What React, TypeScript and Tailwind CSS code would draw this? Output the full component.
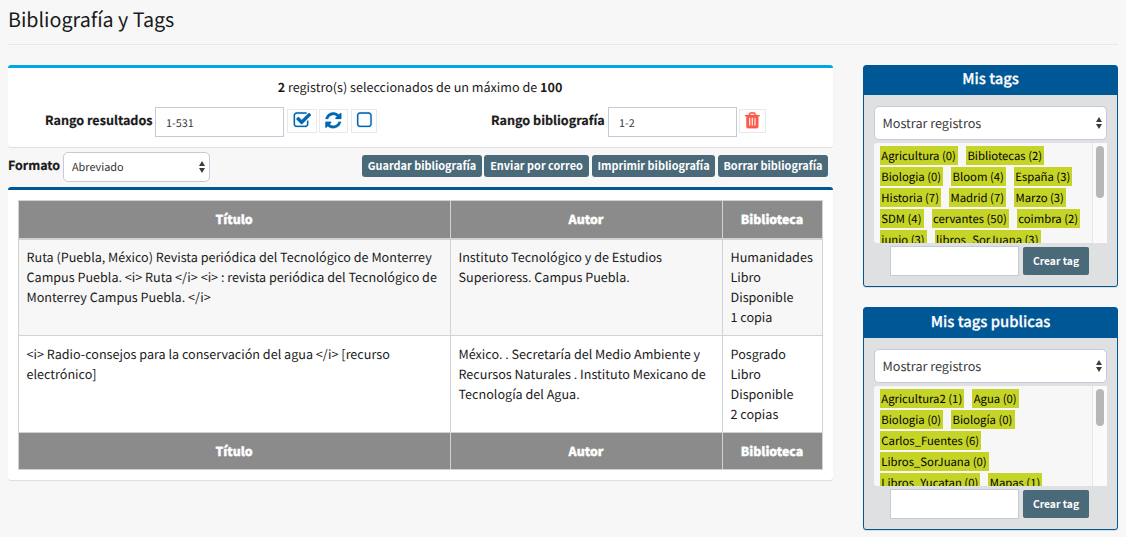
import type { ReactNode } from "react";

const PATHS = {
  check:
    "M1472 930v318q0 119-84.5 203.5t-203.5 84.5h-832q-119 0-203.5-84.5t-84.5-203.5v-832q0-119 84.5-203.5t203.5-84.5h832q63 0 117 25 15 7 18 23 3 17-9 29l-49 49q-10 10-23 10-3 0-9-2-23-6-45-6h-832q-66 0-113 47t-47 113v832q0 66 47 113t113 47h832q66 0 113-47t47-113v-254q0-13 9-22l64-64q10-10 23-10 6 0 12 3 20 8 20 29zm231-489l-814 814q-24 24-57 24t-57-24l-430-430q-24-24-24-57t24-57l110-110q24-24 57-24t57 24l263 263 647-647q24-24 57-24t57 24l110 110q24 24 24 57t-24 57z",
  refresh:
    "M1639 1056q0 5-1 7-64 268-268 434.5t-478 166.5q-146 0-282.5-55t-243.5-157l-129 129q-19 19-45 19t-45-19-19-45v-448q0-26 19-45t45-19h448q26 0 45 19t19 45-19 45l-137 137q71 66 161 102t187 36q134 0 250-65t186-179q11-17 53-117 8-23 30-23h192q13 0 22.5 9.5t9.5 22.5zm25-800v448q0 26-19 45t-45 19h-448q-26 0-45-19t-19-45 19-45l138-138q-148-137-349-137-134 0-250 65t-186 179q-11 17-53 117-8 23-30 23h-199q-13 0-22.5-9.5t-9.5-22.5v-7q65-268 270-434.5t480-166.5q146 0 284 55.5t245 156.5l130-129q19-19 45-19t45 19 19 45z",
  square:
    "M1312 256h-832q-66 0-113 47t-47 113v832q0 66 47 113t113 47h832q66 0 113-47t47-113v-832q0-66-47-113t-113-47zm288 160v832q0 119-84.5 203.5t-203.5 84.5h-832q-119 0-203.5-84.5t-84.5-203.5v-832q0-119 84.5-203.5t203.5-84.5h832q119 0 203.5 84.5t84.5 203.5z",
  trash:
    "M704 1376v-704q0-14-9-23t-23-9h-64q-14 0-23 9t-9 23v704q0 14 9 23t23 9h64q14 0 23-9t9-23zm256 0v-704q0-14-9-23t-23-9h-64q-14 0-23 9t-9 23v704q0 14 9 23t23 9h64q14 0 23-9t9-23zm256 0v-704q0-14-9-23t-23-9h-64q-14 0-23 9t-9 23v704q0 14 9 23t23 9h64q14 0 23-9t9-23zm-544-992h448l-48-117q-7-9-17-11h-317q-10 2-17 11zm928 32v64q0 14-9 23t-23 9h-96v948q0 83-47 143.5t-113 60.5h-832q-66 0-113-58.5t-47-141.5v-952h-96q-14 0-23-9t-9-23v-64q0-14 9-23t23-9h309l70-167q15-37 54-63t79-26h320q40 0 79 26t54 63l70 167h309q14 0 23 9t9 23z",
};

function IconButton({ name, className }: { name: keyof typeof PATHS; className: string }) {
  return (
    <button className={`mt-0.5 flex h-6 shrink-0 justify-center border border-[#e9e9e9] bg-white ${className}`}>
      <svg viewBox="0 0 1792 1792" className="mt-[0.7px] size-[18.7px] shrink-0 fill-current stroke-current stroke-[24]">
        <path d={PATHS[name]} />
      </svg>
    </button>
  );
}

function Arrows() {
  return (
    <svg viewBox="0 0 8 14" className="h-3.5 w-2 shrink-0 fill-[#3d3d3d]">
      <path d="M4 1L7 6H1zM4 13L1 8h6z" />
    </svg>
  );
}

function ActionButton({ className, children }: { className: string; children: ReactNode }) {
  return (
    <button
      className={`flex h-[22px] shrink-0 items-center justify-center rounded-[3px] bg-[#4b6a79] pb-0.5 text-[10.9px] font-bold whitespace-nowrap text-white ${className}`}
    >
      {children}
    </button>
  );
}

const HEADINGS = ["Título", "Autor", "Biblioteca"];

const RECORDS = [
  {
    title: [
      "Ruta (Puebla, México) Revista periódica del Tecnológico de Monterrey",
      "Campus Puebla. <i> Ruta </i> <i> : revista periódica del Tecnológico de",
      "Monterrey Campus Puebla. </i>",
    ],
    author: ["Instituto Tecnológico y de Estudios", "Superioress. Campus Puebla."],
    library: ["Humanidades", "Libro", "Disponible", "1 copia"],
  },
  {
    title: ["<i> Radio-consejos para la conservación del agua </i> [recurso", "electrónico]"],
    author: [
      "México. . Secretaría del Medio Ambiente y",
      "Recursos Naturales . Instituto Mexicano de",
      "Tecnología del Agua.",
    ],
    library: ["Posgrado", "Libro", "Disponible", "2 copias"],
  },
];

function Cell({ lines, className }: { lines: string[]; className: string }) {
  return (
    <td className={`border border-[#d2d2d2] pl-[7.5px] align-top leading-5 whitespace-nowrap ${className}`}>
      {lines.map((line) => (
        <div key={line}>{line}</div>
      ))}
    </td>
  );
}

function HeadingRow({ className }: { className: string }) {
  return (
    <tr className={`bg-[#8b8b8b] text-[12.3px] text-white ${className}`}>
      {HEADINGS.map((h) => (
        <th
          key={h}
          className="border border-[#d2d2d2] pr-px text-center font-black [-webkit-text-stroke:0.35px_white]"
        >
          {h}
        </th>
      ))}
    </tr>
  );
}

type TagPanelProps = {
  title: string;
  rows: string[][];
  className: string;
  headerClass: string;
  thumbClass: string;
};

function TagPanel({ title, rows, className, headerClass, thumbClass }: TagPanelProps) {
  return (
    <section
      className={`flex flex-col rounded-[3px] border border-[#005796] bg-[#dfe0e2] shadow-[0_1px_1px_rgba(0,0,0,0.1)] ${className}`}
    >
      <h2
        className={`flex shrink-0 items-center justify-center bg-[#005796] text-[14.8px] font-medium text-white [-webkit-text-stroke:0.25px_white] ${headerClass}`}
      >
        {title}
      </h2>
      <div className="mt-[11px] ml-2.5 flex h-[34px] w-[233px] shrink-0 items-center justify-between rounded-[5px] border border-[#c6cad8] bg-white pr-[3px] pl-[7.5px] text-[12.65px] text-[#3a3a3a]">
        <span className="pb-px">Mostrar registros</span>
        <Arrows />
      </div>
      <div className="mt-[3px] ml-2.5 flex h-[100px] w-[233px] shrink-0 overflow-hidden rounded-l-[3px] bg-[#f7f7f7]">
        <div className="flex grow flex-col gap-0.5 pt-[3px] pl-1.5">
          {rows.map((row) => (
            <div key={row[0]} className="flex shrink-0 gap-2">
              {row.map((tag) => (
                <span
                  key={tag}
                  className="h-[19px] bg-[#c5d427] pr-[2.2px] pl-[1.3px] text-[11.32px] leading-[20px] whitespace-nowrap text-black"
                >
                  {tag}
                </span>
              ))}
            </div>
          ))}
        </div>
        <div className="flex w-[15px] shrink-0 justify-center border-l border-[#e6e6e6] bg-[#fafafa] pt-[3px]">
          <div className={`w-2 rounded-full bg-[#b7b7b7] ${thumbClass}`} />
        </div>
      </div>
      <div className="mt-[3px] ml-[26px] flex items-center gap-1">
        <div className="h-[30px] w-[129px] border border-[#c6cad8] bg-white" />
        <button className="flex h-7 w-[66px] items-center justify-center rounded-[2px] bg-[#4b6a79] text-[10.3px] font-bold text-white">
          Crear tag
        </button>
      </div>
    </section>
  );
}

export default function App() {
  return (
    <div className="h-[537px] w-[1126px] overflow-hidden bg-[#f7f7f7] px-2 font-['Noto_Sans_CJK_SC','Source_Sans_Pro',sans-serif] text-[12.6px] text-[#1a1a1a] [text-rendering:geometricPrecision]">
      <header className="h-[45px] border-b border-[#e8e8e8] pt-1">
        <h1 className="text-[19.7px] leading-[30px]">Bibliografía y Tags</h1>
      </header>
      <div className="flex gap-[30px] pt-5">
        <main className="w-[825px] shrink-0">
          <section className="h-[82px] rounded-[3px] border-t-[3px] border-[#00a7e1] bg-white pt-[9px] shadow-[0_1px_1px_rgba(0,0,0,0.1)]">
            <p className="pr-px text-center leading-5">
              <b>2</b> registro(s) seleccionados de un máximo de <b>100</b>
            </p>
            <div className="mt-[10px] flex pl-[37px]">
              <label className="w-[110px] leading-[26px] font-bold whitespace-nowrap [-webkit-text-stroke:0.2px_#1a1a1a]">
                Rango resultados
              </label>
              <div className="h-[30px] w-[129px] border border-[#c6cad8] pl-[10px] text-[10.8px] leading-[30px] text-[#3a3a3a]">
                1-531
              </div>
              <IconButton name="check" className="ml-[3px] w-[30px] text-[#0067b1]" />
              <IconButton name="refresh" className="ml-0.5 w-[29px] text-[#0067b1]" />
              <IconButton name="square" className="ml-[3px] w-[26px] text-[#0067b1]" />
              <label className="ml-[114px] w-[117px] leading-[26px] font-bold whitespace-nowrap [-webkit-text-stroke:0.2px_#1a1a1a]">
                Rango bibliografía
              </label>
              <div className="h-[30px] w-[129px] border border-[#c6cad8] pl-[10px] text-[10.8px] leading-[30px] text-[#3a3a3a]">
                1-2
              </div>
              <IconButton name="trash" className="ml-0.5 w-[27px] text-[#fb5a4b]" />
            </div>
          </section>
          <div className="mt-[5px] flex h-[30px] items-start">
            <label className="w-[55px] text-[12.45px] leading-[26px] font-bold [-webkit-text-stroke:0.2px_#1a1a1a]">Formato</label>
            <div className="flex h-[30px] w-[147px] items-center justify-between rounded-[5px] border border-[#c6cad8] bg-white pr-[3px] pl-2 text-[10.9px] text-[#333]">
              <span>Abreviado</span>
              <Arrows />
            </div>
            <div className="mt-[3px] ml-[152px] flex">
              <ActionButton className="w-[120px]">Guardar bibliografía</ActionButton>
              <ActionButton className="ml-0.5 w-[105px]">Enviar por correo</ActionButton>
              <ActionButton className="ml-[3px] w-[123px]">Imprimir bibliografía</ActionButton>
              <ActionButton className="ml-[3px] w-[110px]">Borrar bibliografía</ActionButton>
            </div>
          </div>
          <section className="mt-[5px] h-[293px] rounded-[3px] border-t-[3px] border-[#005796] bg-white pt-[10px] pl-[10px] shadow-[0_1px_1px_rgba(0,0,0,0.1)]">
            <table className="w-[805px] table-fixed border-collapse">
              <colgroup>
                <col className="w-[432px]" />
                <col className="w-[272px]" />
                <col className="w-[100px]" />
              </colgroup>
              <thead>
                <HeadingRow className="h-[38px] border-b-2 border-[#d2d2d2]" />
              </thead>
              <tbody>
                {RECORDS.map((record, i) => {
                  const padding = i === 0 ? "pt-[7px]" : "pt-2";
                  return (
                    <tr key={record.title[0]} className="h-[97px] odd:bg-[#f7f7f7]">
                      <Cell lines={record.title} className={padding} />
                      <Cell lines={record.author} className={padding} />
                      <Cell lines={record.library} className={padding} />
                    </tr>
                  );
                })}
              </tbody>
              <tfoot>
                <HeadingRow className="h-[37px]" />
              </tfoot>
            </table>
          </section>
        </main>
        <aside className="flex w-[255px] shrink-0 flex-col gap-5">
          <TagPanel
            title="Mis tags"
            className="h-[222px]"
            headerClass="h-[29px] pb-[3px]"
            thumbClass="h-[52px]"
            rows={[
              ["Agricultura (0)", "Bibliotecas (2)"],
              ["Biologia (0)", "Bloom (4)", "España (3)"],
              ["Historia (7)", "Madrid (7)", "Marzo (3)"],
              ["SDM (4)", "cervantes (50)", "coimbra (2)"],
              ["junio (3)", "libros_SorJuana (3)"],
            ]}
          />
          <TagPanel
            title="Mis tags publicas"
            className="h-[223px]"
            headerClass="h-[30px] pb-px"
            thumbClass="h-[37px]"
            rows={[
              ["Agricultura2 (1)", "Agua (0)"],
              ["Biologia (0)", "Biología (0)"],
              ["Carlos_Fuentes (6)"],
              ["Libros_SorJuana (0)"],
              ["Libros_Yucatan (0)", "Mapas (1)"],
            ]}
          />
        </aside>
      </div>
    </div>
  );
}
